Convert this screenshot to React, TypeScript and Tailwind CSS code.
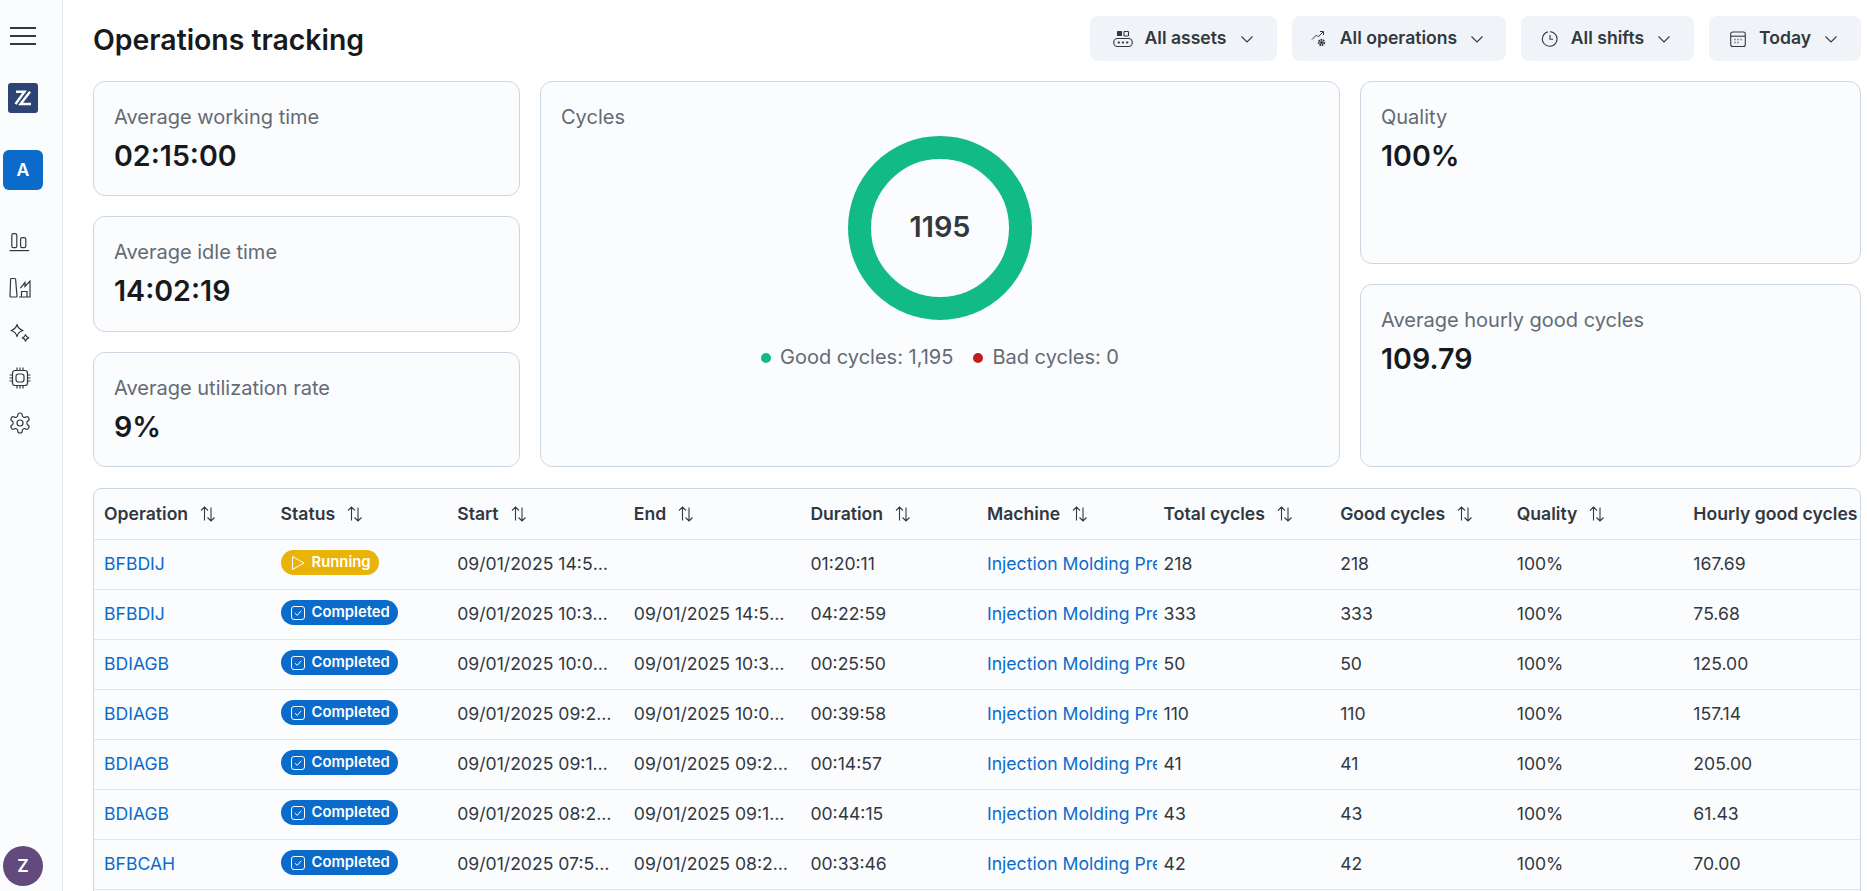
import React from "react";

const stroke = "#32383e";

function Hamburger() {
  return (
    <svg width="26" height="18" viewBox="0 0 26 18" fill="none" stroke="#32383e" strokeWidth="1.8">
      <path d="M0 1h26M0 9h26M0 17h26" />
    </svg>
  );
}

function Logo() {
  return (
    <div className="flex h-[30px] w-[30px] items-center justify-center rounded-[3px] bg-[#2d4373]">
      <svg width="30" height="30" viewBox="0 0 30 30" fill="none" stroke="#fff" strokeWidth="2.4">
        <path d="M8 8.800h8.500L7.500 21" />
        <path d="M22 8.800 12.500 21H23" />
      </svg>
    </div>
  );
}

function IconBars() {
  return (
    <svg width="24" height="24" viewBox="0 0 24 24" fill="none" stroke={stroke} strokeWidth="1.2">
      <rect x="3.800" y="2.600" width="5" height="14" rx="1.600" />
      <rect x="12.600" y="6.600" width="5.200" height="10" rx="1.600" />
      <path d="M1.600 19.600h19.600" />
    </svg>
  );
}
function IconFactory() {
  return (
    <svg width="24" height="24" viewBox="0 0 24 24" fill="none" stroke={stroke} strokeWidth="1.2">
      <path d="M3.500 2.500h3.200c.5 0 .8.300.9.800L9 20c0 .6-.3 1-.9 1H3c-.6 0-1-.4-1-1L2.600 3.400c0-.6.400-.9.900-.9z" />
      <path d="M11 21h11V5l-5 5.500V6.500l-4.600 5.600" />
      <path d="M13.500 21v-5.500h5.500V21" />
    </svg>
  );
}
function IconSparkles() {
  return (
    <svg width="24" height="24" viewBox="0 0 24 24" fill="none" stroke={stroke} strokeWidth="1.2" strokeLinejoin="round">
      <path d="M9 3.500c.9 3.400 2.400 5 6 6-3.600 1-5.100 2.600-6 6-.9-3.400-2.400-5-6-6 3.600-1 5.100-2.600 6-6z" />
      <path d="M17.500 13.500c.4 1.900 1.300 2.800 3.300 3.300-2 .5-2.900 1.400-3.300 3.300-.4-1.900-1.300-2.800-3.300-3.300 2-.5 2.900-1.400 3.300-3.300z" />
    </svg>
  );
}
function IconChip() {
  return (
    <svg width="24" height="24" viewBox="0 0 24 24" fill="none" stroke={stroke} strokeWidth="1.2">
      <rect x="4.500" y="4.500" width="15" height="15" rx="2.500" />
      <rect x="8" y="8" width="8" height="8" rx="2.500" />
      <path d="M9 1.500v3M12 1.500v3M15 1.500v3M9 19.500v3M12 19.500v3M15 19.500v3M1.500 9h3M1.500 12h3M1.500 15h3M19.500 9h3M19.500 12h3M19.500 15h3" />
    </svg>
  );
}
function IconGear() {
  return (
    <svg width="24" height="24" viewBox="0 0 24 24" fill="none" stroke={stroke} strokeWidth="1.2" strokeLinejoin="round">
      <path d="M12.220 2h-.440a2 2 0 0 0-2 2v.180a2 2 0 0 1-1 1.730l-.430.250a2 2 0 0 1-2 0l-.150-.080a2 2 0 0 0-2.730.730l-.220.380a2 2 0 0 0 .730 2.730l.150.100a2 2 0 0 1 1 1.720v.510a2 2 0 0 1-1 1.740l-.150.090a2 2 0 0 0-.730 2.730l.220.380a2 2 0 0 0 2.730.730l.150-.080a2 2 0 0 1 2 0l.430.250a2 2 0 0 1 1 1.730V20a2 2 0 0 0 2 2h.440a2 2 0 0 0 2-2v-.180a2 2 0 0 1 1-1.730l.430-.250a2 2 0 0 1 2 0l.150.080a2 2 0 0 0 2.730-.730l.220-.390a2 2 0 0 0-.730-2.730l-.150-.080a2 2 0 0 1-1-1.740v-.500a2 2 0 0 1 1-1.740l.150-.090a2 2 0 0 0 .730-2.730l-.220-.380a2 2 0 0 0-2.730-.730l-.150.080a2 2 0 0 1-2 0l-.430-.250a2 2 0 0 1-1-1.730V4a2 2 0 0 0-2-2z" />
      <circle cx="12" cy="12" r="3" />
    </svg>
  );
}

function Chevron() {
  return (
    <svg width="14" height="14" viewBox="0 0 14 14" fill="none" stroke="#32383e" strokeWidth="1.1" className="shrink-0">
      <path d="M1.500 4.500 7 10l5.500-5.500" />
    </svg>
  );
}
function IconConveyor() {
  return (
    <svg width="20" height="20" viewBox="0 0 20 20" fill="none" stroke="#32383e" strokeWidth="1.1">
      <rect x="4" y="2" width="5" height="5" fill="#32383e" stroke="none" rx="0.6" />
      <rect x="11" y="2.500" width="4.500" height="4.500" rx="0.6" />
      <rect x="0.800" y="9.500" width="18.400" height="8" rx="3.600" />
      <path d="M5.500 13.500h.6M9.700 13.500h.6M13.900 13.500h.6" strokeWidth="1.800" strokeLinecap="round" />
    </svg>
  );
}
function IconOps() {
  return (
    <svg width="20" height="20" viewBox="0 0 20 20" fill="none" stroke="#32383e" strokeWidth="1">
      <path d="M3 10.500l4.500-4.500 1.800 1.800L14 3M11 2.500h3.500V6" />
      <circle cx="12.500" cy="13.500" r="2.700" strokeWidth="2" strokeDasharray="1.600 0.700" />
      <circle cx="12.500" cy="13.500" r="1.500" fill="#32383e" stroke="none" />
    </svg>
  );
}
function IconClock() {
  return (
    <svg width="20" height="20" viewBox="0 0 20 20" fill="none" stroke="#32383e" strokeWidth="1.100">
      <path d="M8 2.900A7.300 7.300 0 1 0 10 2.700v0" />
      <path d="M10 6v4.300h3" />
    </svg>
  );
}
function IconCalendar() {
  return (
    <svg width="20" height="20" viewBox="0 0 20 20" fill="none" stroke="#32383e" strokeWidth="1.100">
      <rect x="2.700" y="3" width="14.600" height="14.500" rx="2" />
      <path d="M2.700 7.200h14.600" />
      <path d="M6.500 10.500h1M9.500 10.500h1M12.500 10.500h1M6.500 13.500h1M9.500 13.500h1" strokeWidth="1.300" />
    </svg>
  );
}

function SortIcon() {
  return (
    <svg width="20" height="20" viewBox="0 0 20 20" fill="none" stroke="#32383e" strokeWidth="1.100" className="shrink-0">
      <path d="M6.500 16.500V3M3 6.500 6.500 3 10 6.500" />
      <path d="M13 3.500V17M9.500 13.500 13 17l3.500-3.500" />
    </svg>
  );
}

function PlayIcon() {
  return (
    <svg width="16" height="16" viewBox="0 0 16 16" fill="none" stroke="#fff" strokeWidth="1">
      <path d="M2.500 1.500 14 8 2.500 14.500z" strokeLinejoin="round" />
    </svg>
  );
}
function CheckIcon() {
  return (
    <svg width="16" height="16" viewBox="0 0 16 16" fill="none" stroke="#fff" strokeWidth="1">
      <rect x="1.500" y="1.500" width="13" height="13" rx="2.500" />
      <path d="M5 8.200l2.200 2.200L11.200 5.800" />
    </svg>
  );
}

function FilterButton({ icon, label, w }: { icon: React.ReactNode; label: string; w: string }) {
  return (
    <button className={`flex h-[45px] items-center justify-center gap-[11px] rounded-lg bg-[#f0f4f8] text-[17.6px] font-semibold text-[#32383e] ${w}`}>
      {icon}
      <span className="mr-[2px]">{label}</span>
      <Chevron />
    </button>
  );
}

function Stat({ label, value }: { label: string; value: string }) {
  return (
    <div className="rounded-xl border border-[#cdd7e1] bg-[#fbfcfe] px-[20px] pt-[22px]">
      <div className="text-[20px] leading-[27px] text-[#636b74]">{label}</div>
      <div className="mt-[5px] text-[28.6px] font-semibold leading-[40px] text-[#171a1c]">{value}</div>
    </div>
  );
}

const headers = ["Operation", "Status", "Start", "End", "Duration", "Machine", "Total cycles", "Good cycles", "Quality", "Hourly good cycles"];

const rows = [
  ["BFBDIJ", "Running", "09/01/2025 14:58:11", "", "01:20:11", "218", "218", "167.69"],
  ["BFBDIJ", "Completed", "09/01/2025 10:35:12", "09/01/2025 14:58:11", "04:22:59", "333", "333", "75.68"],
  ["BDIAGB", "Completed", "09/01/2025 10:09:22", "09/01/2025 10:35:12", "00:25:50", "50", "50", "125.00"],
  ["BDIAGB", "Completed", "09/01/2025 09:29:24", "09/01/2025 10:09:22", "00:39:58", "110", "110", "157.14"],
  ["BDIAGB", "Completed", "09/01/2025 09:14:27", "09/01/2025 09:29:24", "00:14:57", "41", "41", "205.00"],
  ["BDIAGB", "Completed", "09/01/2025 08:29:12", "09/01/2025 09:14:27", "00:44:15", "43", "43", "61.43"],
  ["BFBCAH", "Completed", "09/01/2025 07:55:26", "09/01/2025 08:29:12", "00:33:46", "42", "42", "70.00"],
  ["BFBCAH", "Completed", "09/01/2025 07:20:26", "09/01/2025 07:55:26", "00:35:00", "40", "40", "68.57"],
];

function Badge({ status }: { status: string }) {
  const running = status === "Running";
  return (
    <span className={`inline-flex h-[25px] items-center gap-[6px] rounded-full pl-[9px] pr-[8px] text-[14.8px] font-semibold text-white ${running ? "bg-[#eab308]" : "bg-[#0b6bcb]"}`}>
      {running ? <PlayIcon /> : <CheckIcon />}
      {status}
    </span>
  );
}

export default function App() {
  return (
    <div className="flex h-screen w-full overflow-hidden bg-white font-['Inter',sans-serif] text-[#32383e]">
      <aside className="flex h-full w-[63px] shrink-0 flex-col items-start border-r border-[#dde7ee] bg-[#fbfcfe] pl-[3px]">
        <div className="mt-[27px] ml-[7px]"><Hamburger /></div>
        <div className="mt-[38px] ml-[5px]"><Logo /></div>
        <button className="mt-[37px] flex h-[40px] w-[40px] items-center justify-center rounded-md bg-[#0b6bcb] text-[17.6px] font-semibold text-white">A</button>
        <nav className="mt-[41px] ml-[5px] flex flex-col gap-[21px]">
          <IconBars />
          <IconFactory />
          <IconSparkles />
          <IconChip />
          <IconGear />
        </nav>
        <div className="mt-auto mb-[5px] flex h-[40px] w-[40px] items-center justify-center rounded-full bg-[#624a7c] text-[17.6px] font-semibold text-white">Z</div>
      </aside>

      <main className="min-w-0 flex-1 pl-[30px] pr-[6px]">
        <header className="mt-[16px] flex h-[45px] items-center justify-between">
          <h1 className="pt-[1px] text-[28.4px] font-semibold leading-[45px] text-[#171a1c]">Operations tracking</h1>
          <div className="flex gap-[15px]">
            <FilterButton icon={<IconConveyor />} label="All assets" w="w-[187px]" />
            <FilterButton icon={<IconOps />} label="All operations" w="w-[214px] pr-[5px]" />
            <FilterButton icon={<IconClock />} label="All shifts" w="w-[173px] pr-[4px]" />
            <FilterButton icon={<IconCalendar />} label="Today" w="w-[152px] pr-[4px]" />
          </div>
        </header>

        <section className="mt-[20px] flex h-[386px] gap-[20px]">
          <div className="grid w-[427px] shrink-0 grid-rows-3 gap-[20px]">
            <Stat label="Average working time" value="02:15:00" />
            <Stat label="Average idle time" value="14:02:19" />
            <Stat label="Average utilization rate" value="9%" />
          </div>
          <div className="flex min-w-0 flex-1 flex-col rounded-xl border border-[#cdd7e1] bg-[#fbfcfe] px-[20px] pt-[22px]">
            <div className="text-[20px] leading-[27px] text-[#636b74]">Cycles</div>
            <div className="relative mx-auto mt-[5px] h-[184px] w-[184px]">
              <svg width="184" height="184" viewBox="0 0 184 184">
                <circle cx="92" cy="92" r="80.500" fill="none" stroke="#12bb84" strokeWidth="23" />
              </svg>
              <div className="absolute inset-0 flex items-center justify-center pb-[2px] text-[28.8px] font-semibold text-[#32383e]">1195</div>
            </div>
            <div className="mt-[24px] flex items-center justify-center gap-[20px] text-[20px] leading-[27px] text-[#636b74]">
              <span className="flex items-center gap-[9px]"><span className="h-[10px] w-[10px] rounded-full bg-[#12bb84]" />Good cycles: 1,195</span>
              <span className="flex items-center gap-[9px]"><span className="h-[10px] w-[10px] rounded-full bg-[#c41c1c]" />Bad cycles: 0</span>
            </div>
          </div>
          <div className="grid w-[501px] shrink-0 grid-rows-2 gap-[20px]">
            <Stat label="Quality" value="100%" />
            <Stat label="Average hourly good cycles" value="109.79" />
          </div>
        </section>

        <section className="mt-[21px] overflow-hidden rounded-t-lg border border-[#cdd7e1] bg-[#fbfcfe]">
          <table className="w-[1766px] table-fixed border-collapse text-[17.6px]">
            <thead>
              <tr className="h-[50px] border-b border-[#dde7ee]">
                {headers.map((h, i) => (
                  <th key={h} className="overflow-hidden pl-[10px] text-left font-semibold text-[#32383e]">
                    <span className="flex items-center gap-[10px] whitespace-nowrap">
                      {h}
                      {i < 9 && <SortIcon />}
                    </span>
                  </th>
                ))}
              </tr>
            </thead>
            <tbody>
              {rows.map((r, i) => (
                <tr key={i} className="h-[50px] border-b border-[#dde7ee]">
                  <td className="pl-[10px] text-[#0b6bcb]">{r[0]}</td>
                  <td className="pl-[10px]"><Badge status={r[1]} /></td>
                  <td className="truncate pl-[10px] pr-[12px]">{r[2]}</td>
                  <td className="truncate pl-[10px] pr-[12px]">{r[3]}</td>
                  <td className="pl-[10px]">{r[4]}</td>
                  <td className="pl-[10px] text-[#0b6bcb]"><div className="w-[170px] overflow-hidden whitespace-nowrap">Injection Molding Press 01</div></td>
                  <td className="pl-[10px]">{r[5]}</td>
                  <td className="pl-[10px]">{r[6]}</td>
                  <td className="pl-[10px]">100%</td>
                  <td className="pl-[10px]">{r[7]}</td>
                </tr>
              ))}
            </tbody>
          </table>
        </section>
      </main>
    </div>
  );
}
